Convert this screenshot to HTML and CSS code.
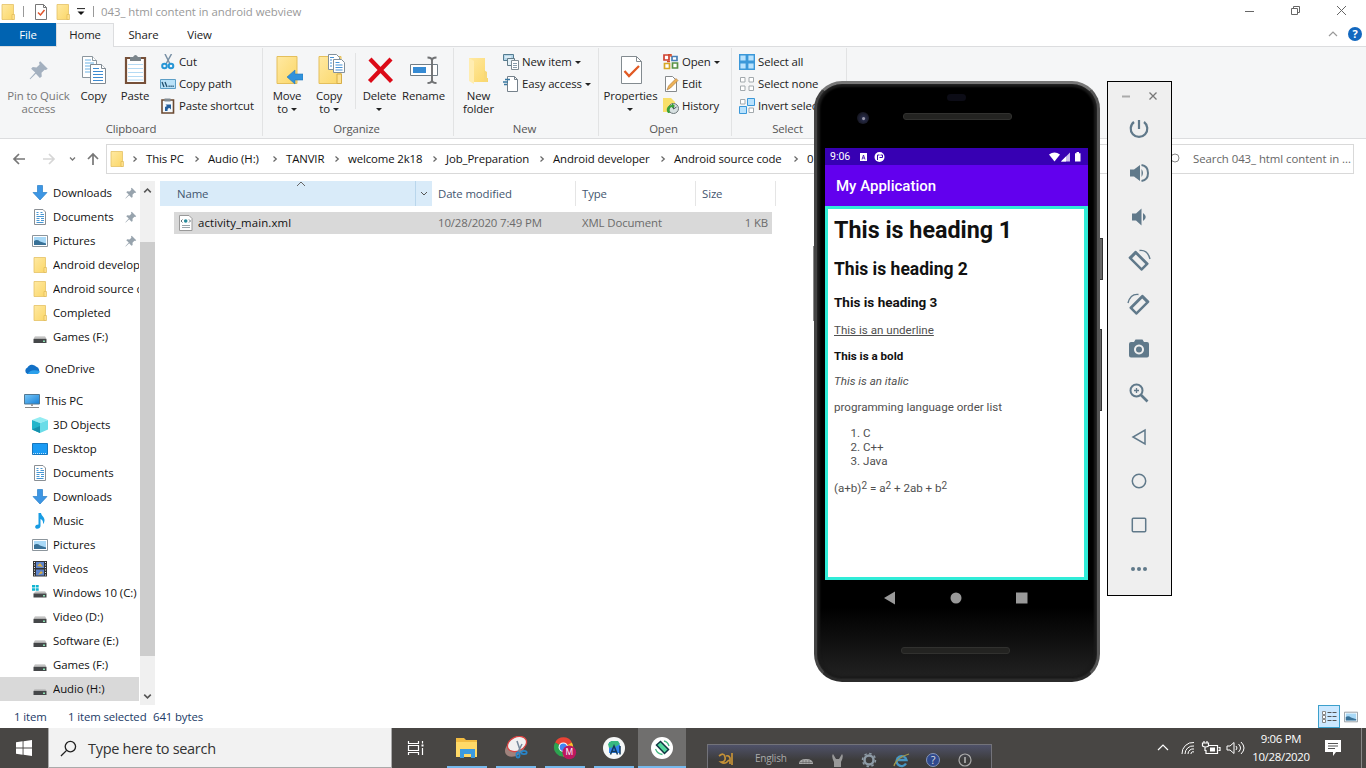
FILE: index.html
```html
<!DOCTYPE html>
<html lang="en">
<head>
<meta charset="utf-8">
<title>043_ html content in android webview</title>
<link rel="stylesheet" href="styles.css">
</head>
<body>
<svg class="defs" aria-hidden="true">
  <defs>
    <linearGradient id="gFold" x1="0" y1="0" x2="1" y2="1"><stop offset="0" stop-color="#ffe9a2"/><stop offset="1" stop-color="#fbd768"/></linearGradient>
    <linearGradient id="gBlue" x1="0" y1="0" x2="1" y2="1"><stop offset="0" stop-color="#7ac8f8"/><stop offset="1" stop-color="#1580d8"/></linearGradient>
    <linearGradient id="gDrive" x1="0" y1="0" x2="0" y2="1"><stop offset="0" stop-color="#e4e4e4"/><stop offset="1" stop-color="#a0a0a0"/></linearGradient>
  </defs>
  <symbol id="folder" viewBox="0 0 16 16"><path d="M2 .5h11.5v15H2z" fill="url(#gFold)" stroke="#e5c266" stroke-width=".8"/><path d="M12 10.500h2.500v5H12z" fill="#ffe08a" stroke="#dcb550" stroke-width=".6"/></symbol>
  <symbol id="tick" viewBox="0 0 16 16"><path d="M2.500 .5h8l3 3v12h-11z" fill="#fff" stroke="#777"/><path d="M10.500 .5v3h3" fill="none" stroke="#777"/><path d="M5 8.500l2.500 2.500 4-5" fill="none" stroke="#e0532a" stroke-width="1.500"/></symbol>
  <symbol id="down" viewBox="0 0 16 16"><path d="M5.500 .5h5v7h4.500L8 15 1 7.500h4.500z" fill="#3d96e4" stroke="#287fc9" stroke-width=".7"/></symbol>
  <symbol id="doc" viewBox="0 0 16 16"><path d="M2.500 .5h8.500l2.500 2.500v12.500h-11z" fill="#fff" stroke="#8a8f94"/><path d="M4.500 3.500h2M8.500 3.500h2M4.500 5.500h2M8.500 5.500H12M4.500 7.500H12M4.500 9.500h3M9 9.500h3M4.500 11.500h3M9 11.500h3M4.500 13.500h7" fill="none" stroke="#4796d3"/></symbol>
  <symbol id="pic" viewBox="0 0 16 16"><path d="M.5 2.500h15v11H.5z" fill="#fff" stroke="#8c959c"/><path d="M2 4h12v8H2z" fill="#a9d9f7"/><path d="M2 8q3-2 6 .5l6 2V12H2z" fill="#397197"/></symbol>
  <symbol id="drive" viewBox="0 0 16 16"><path d="M3 7h10l1.500 3h-13z" fill="url(#gDrive)"/><path d="M1.500 10h13v4h-13z" fill="#454749"/><path d="M11 11.500h2v1.500h-2z" fill="#8ce0b2"/></symbol>
  <symbol id="cdrive" viewBox="0 0 16 16"><path d="M0 0h3v2.500H0zM3.700 0h3v2.500h-3zM0 3.300h3v2.500H0zM3.700 3.300h3v2.500h-3z" fill="#11b5d2"/><path d="M4 6h9l1.500 2.500h-13z" fill="url(#gDrive)"/><path d="M1.500 8.500h13v4h-13z" fill="#454749"/><path d="M11 10h2v1.500h-2z" fill="#8ce0b2"/></symbol>
  <symbol id="cloud" viewBox="0 0 16 16"><path d="M3.500 13a3.500 3.500 0 0 1 0-6.500 5 4.500 0 0 1 8.500-1 4 4 0 0 1 1 7.500z" fill="#1270c6"/><path d="M3.500 13c2-4 7-5 12.500-2.500a3.500 3.500 0 0 1-3 2.500z" fill="#2ba0eb"/></symbol>
  <symbol id="pc" viewBox="0 0 16 16"><path d="M.5 1.500h15v9.500H.5z" fill="url(#gBlue)" stroke="#527893"/><path d="M7 11h2v2H7z" fill="#999"/><path d="M1 14.500h14" stroke="#888"/></symbol>
  <symbol id="cube" viewBox="0 0 16 16"><path d="M0 3l8-3 8 3-8 3z" fill="#93ecf2"/><path d="M0 3l8 3v10l-8-3.500z" fill="#22b5ca"/><path d="M16 3L8 6v10l8-3.500z" fill="#6adce8"/><path d="M0 12.500L8 9v7z" fill="#1691ad"/></symbol>
  <symbol id="desk" viewBox="0 0 16 16"><path d="M.5 2.500h15v11H.5z" fill="#1a9bf4" stroke="#1676bd"/><path d="M1 12.500h14" stroke="#c4e5fa" stroke-dasharray="1 1"/></symbol>
  <symbol id="music" viewBox="0 0 16 16"><path d="M6.500 0H9c.5 3 3.500 4 3.500 7 0 1.500-.5 3-1.500 4 .3-3-.5-4-2.500-5v7c0 1.500-1.700 3-3.700 2.700-2.500-.4-2.300-4.200 1.700-4.200z" fill="#189ce3"/></symbol>
  <symbol id="video" viewBox="0 0 16 16"><path d="M1 0h14v15.500H1z" fill="#343434"/><path d="M4 1h8v6H4zM4 8.500h8v6H4z" fill="#5c83cb"/><path d="M5 5l3-3 3 4zM6 14l3-4 2 2z" fill="#d8ac44"/><path d="M2.500 1v14M13.500 1v14" stroke="#eee" stroke-dasharray="1 1.500"/></symbol>
  <symbol id="pin" viewBox="0 0 16 16"><path d="M9 1l6 6-1.500 1-1-.3-2.500 2.500.2 3-1.500 1.200L5.500 11 1 15.300.5 15 5 10 1.700 7 3 5.600l3 .3L8.500 3.500 8 2z" fill="currentColor"/></symbol>
  <symbol id="sciss" viewBox="0 0 16 16"><path d="M5 0l5 10M11.500 0L6 10" fill="none" stroke="#7890a5" stroke-width="1.500"/><circle cx="4.500" cy="12" r="2.300" fill="none" stroke="#2796d6" stroke-width="2"/><circle cx="11" cy="12" r="2.300" fill="none" stroke="#2796d6" stroke-width="2"/></symbol>
  <symbol id="cpath" viewBox="0 0 16 16"><path d="M.5 3.500h15v9H.5z" fill="#b9e1f8" stroke="#5c9ec6"/><path d="M2 6l2 5M5 6l2 5" stroke="#22516f" stroke-width="1.300"/><path d="M8.500 10.300H14" stroke="#22516f" stroke-width="1.500" stroke-dasharray="1.200 .8"/></symbol>
  <symbol id="pshort" viewBox="0 0 16 16"><path d="M2 2h11.500v13H2z" fill="#f4f9fd" stroke="#6b4a32" stroke-width="1.600"/><path d="M4.500 .5h6v3h-6z" fill="#808b92"/><path d="M5 13V9l2-1-1.500-1.500H11v5L9.500 10C7.800 10 7.500 11 7.500 13z" fill="#245f9c"/></symbol>
  <symbol id="copy" viewBox="0 0 32 32"><g fill="#fff" stroke="#8b969e"><path d="M4.500 2.500h10l4 4v17h-14z"/><path d="M14.500 2.500v4h4"/></g><path d="M7 6h6M7 9h9M7 12h9M7 15h9M7 18h9" stroke="#6db3e5"/><g fill="#fff" stroke="#7e8992"><path d="M12.500 10.500h11l4 4v15h-15z"/><path d="M23.500 10.500v4h4"/></g><path d="M15 14.500h6M15 17.500h10M15 20.500h10M15 23.500h10M15 26.500h10" stroke="#3d8bd1"/></symbol>
  <symbol id="paste" viewBox="0 0 32 32"><path d="M7 4h19v25H7z" fill="#fff" stroke="#765039" stroke-width="2.200"/><path d="M11 3h3q2.500-4 5 0h3v4H11z" fill="#7b858b"/><path d="M9 10.500h15M9 14.500h15M9 18.500h15M9 22.500h15M9 26h15" stroke="#b4daf4"/></symbol>
  <symbol id="move" viewBox="0 0 32 32"><path d="M6 2.500h20v27H6z" fill="url(#gFold)" stroke="#e4bf5c"/><path d="M16 23l8-7v4h8v6h-8v4z" fill="#3092dc" stroke="#2279bc" stroke-width=".6"/></symbol>
  <symbol id="copyto" viewBox="0 0 32 32"><path d="M6 2.500h22v27H6z" fill="url(#gFold)" stroke="#e4bf5c"/><path d="M24 20h4.500v9.500H24z" fill="#ffe28f" stroke="#d6ae49"/><g fill="#fff" stroke="#82909b"><path d="M15.500 .5h8l3 3v12h-11z"/><path d="M20.500 5.500h8l3 3v10h-11z"/></g><path d="M22.500 8.500h4M22.500 11h7M22.500 13.500h7M22.500 16h7M17 3.500h4M17 6h2M17 9h2M17 12h2" stroke="#4592d7"/></symbol>
  <symbol id="delete" viewBox="0 0 32 32"><path d="M6 5l21.500 22.500M27 5L5.500 27.500" stroke="#dc0a18" stroke-width="4.200"/></symbol>
  <symbol id="rename" viewBox="0 0 32 32"><path d="M2.500 10.500h27v11h-27z" fill="#fff" stroke="#707d86"/><path d="M5 13h13v6H5z" fill="#368bd4"/><path d="M19.500 3.500q4.500 0 4.500 3v19.500q0 3-4.500 3M28.500 3.500q-4.500 0-4.500 3M24 26q0 3 4.500 3" stroke="#707274" stroke-width="1.900" fill="none"/></symbol>
  <symbol id="newfold" viewBox="0 0 32 32"><path d="M6 4h16v20h3v4H11l-5-2z" fill="url(#gFold)"/><path d="M6 4l5 3v23l-5-3z" fill="#ffedb1"/><path d="M21 16l3 2v10h-3z" fill="#f7d878"/></symbol>
  <symbol id="newitem" viewBox="0 0 16 16"><path d="M.5.5h10v6H.5z" fill="#b6d7ea" stroke="#557c91"/><path d="M2 3h6" stroke="#fff"/><path d="M4.500 4.500h7v7h-7z" fill="#e3f2f9" stroke="#627b88"/><path d="M8.500 6.500h7v9h-7z" fill="#fff" stroke="#7e8b93"/><path d="M10 9.500h4M10 11.500h4M10 13.500h4" stroke="#899dab"/></symbol>
  <symbol id="easy" viewBox="0 0 16 16"><path d="M4.500.5h7l3 3v12h-10z" fill="#fff" stroke="#75818b"/><path d="M11.500.5v3h3" stroke="#75818b" fill="none"/><path d="M2 3.500h5M0 6h5M1 8.500h3" stroke="#3978a1" stroke-width="1.500"/></symbol>
  <symbol id="prop" viewBox="0 0 32 32"><path d="M6.500 2.500h15l5 5v22h-20z" fill="#fff" stroke="#838b90"/><path d="M21.500 2.500v5h5" fill="none" stroke="#838b90"/><path d="M9.500 17l4.500 5L24 12" fill="none" stroke="#e15a24" stroke-width="2.300"/></symbol>
  <symbol id="open" viewBox="0 0 16 16"><g fill="#fff" stroke-width="1.700"><path d="M1 1h5v5H1z" stroke="#cf4030"/><path d="M9 2.500h5v4H9z" stroke="#487fb6"/><path d="M1.500 9.500h5v5h-5z" stroke="#d7a823"/><path d="M9.500 9h5v5h-5z" stroke="#579245"/></g><path d="M5 .8h3v2M4 7.500h3" fill="none" stroke="#d14e29" stroke-width="1.500"/></symbol>
  <symbol id="edit" viewBox="0 0 16 16"><path d="M2.500.5h7l4 4v11h-11z" fill="#fff" stroke="#85898b"/><path d="M15 4.500L7.500 12 4 14l1.500-4L13 2.500z" fill="#edb257" stroke="#a97538" stroke-width=".6"/></symbol>
  <symbol id="hist" viewBox="0 0 16 16"><path d="M0 0h8l4 4v10H0z" fill="#f8df69"/><circle cx="10.500" cy="10.500" r="5" fill="#d7e0e1" stroke="#6c7779"/><path d="M10.500 8v3l3-2" fill="none" stroke="#4e5a60"/><path d="M5 15c-3-4 0-8 4-8V5l3 3-3 2.500V9c-2 0-3 3-2 6z" fill="#38a139"/></symbol>
  <symbol id="selall" viewBox="0 0 16 16"><path d="M.7.7h6.600v6.600H.7zM8.700.7h6.600v6.600H8.700zM.7 8.700h6.600v6.600H.7zM8.700 8.700h6.600v6.600H8.700z" fill="#b9e2fd" stroke="#3b98d9" stroke-width="1.400"/></symbol>
  <symbol id="selnone" viewBox="0 0 16 16"><path d="M1.500 1.500h4.500v4.500H1.500zM10 1.500h4.500v4.500H10zM1.500 10h4.500v4.500H1.500zM10 10h4.500v4.500H10z" fill="#fff" stroke="#a2a9ad"/></symbol>
  <symbol id="selinv" viewBox="0 0 16 16"><path d="M1.500 1.500h4.500v4.500H1.500zM10 10h4.500v4.500H10z" fill="#fff" stroke="#a2a9ad"/><path d="M8.500.5h7v7h-7zM.5 8.500h7v7h-7z" fill="#b9e2fd" stroke="#3b98d9"/></symbol>
  <symbol id="xml" viewBox="0 0 16 16"><path d="M1.500 .5h9.500l3 3v12H1.500z" fill="#fff" stroke="#999"/><path d="M4 10.500h8M4 12.500h8" stroke="#9aa4aa"/><circle cx="7.700" cy="6" r="1.800" fill="#278b9b"/><path d="M4.500 4.500L3 6l1.500 1.500M11 4.500L12.500 6 11 7.500" fill="none" stroke="#657177"/></symbol>
  <symbol id="chev" viewBox="0 0 8 8"><path d="M2.500 1.500L5.300 4 2.500 6.500" fill="none" stroke="#666" stroke-width="1.200"/></symbol>
  <symbol id="rot" viewBox="0 0 24 24"><path fill-rule="evenodd" d="M7.400 2.600L1.900 8.100q-.7.7 0 1.400l12 12q.7.700 1.400 0l6-6q.7-.7 0-1.400l-12-12q-.7-.7-1.400 0zM8.800 5.500L18.300 15l-3.700 3.700L5.100 9.200z"/><path d="M12.500 1.500Q20.500.5 23 10" fill="none" stroke="currentColor" stroke-width="1.400"/></symbol>
</svg>

<div class="screen">
  <header class="title">
    <svg class="i16"><use href="#folder"/></svg><span class="bar b1"></span>
    <svg class="i16 t2"><use href="#tick"/></svg><svg class="i16 t3"><use href="#folder"/></svg>
    <svg class="qd" viewBox="0 0 8 8"><path d="M0 .6h8" stroke="#222"/><path d="M.5 3.500h7L4 7z" fill="#111"/></svg>
    <span class="bar b2"></span><span class="cap">043_ html content in android webview</span>
    <svg class="wc" viewBox="0 0 116 16" fill="none" stroke="#666"><path d="M5 8.500h9M51.500 5.500h6v6h-6zM53.500 5.500v-2h6v6h-2M97 3l9 9M106 3l-9 9"/></svg>
  </header>
  <nav class="tabs">
    <span class="file">File</span><span class="home">Home</span><span class="tab">Share</span><span class="tab view">View</span>
    <svg class="hlp" viewBox="0 0 36 16"><path d="M1 10l4-4 4 4" fill="none" stroke="#999" stroke-width="1.200"/><circle cx="27" cy="8" r="7" fill="#1368bf"/><text x="27" y="12" text-anchor="middle" fill="#fff" font-size="11" font-weight="bold">?</text></svg>
  </nav>
  <section class="ribbon">
    <div class="grp g1"><div class="tools">
      <div class="big dis w77"><svg class="i32"><use href="#pin" x="6" y="6" width="20" height="20"/></svg><span>Pin to Quick<br>access</span></div>
      <div class="big w33"><svg class="i32"><use href="#copy"/></svg><span>Copy</span></div>
      <div class="big w50"><svg class="i32"><use href="#paste"/></svg><span>Paste</span></div>
      <div class="rows"><div><svg class="i16"><use href="#sciss"/></svg>Cut</div><div><svg class="i16"><use href="#cpath"/></svg>Copy path</div><div><svg class="i16"><use href="#pshort"/></svg>Paste shortcut</div></div>
    </div><div class="gl">Clipboard</div></div>
    <div class="grp g2"><div class="tools">
      <div class="big w48"><svg class="i32"><use href="#move"/></svg><span>Move<br>to <i class="dd"></i></span></div>
      <div class="big w36"><svg class="i32"><use href="#copyto"/></svg><span>Copy<br>to <i class="dd"></i></span></div>
      <div class="vs"></div>
      <div class="big w48"><svg class="i32"><use href="#delete"/></svg><span>Delete<br><i class="dd"></i></span></div>
      <div class="big w41"><svg class="i32"><use href="#rename"/></svg><span>Rename</span></div>
    </div><div class="gl nudge">Organize</div></div>
    <div class="grp g3"><div class="tools">
      <div class="big w49"><svg class="i32"><use href="#newfold"/></svg><span>New<br>folder</span></div>
      <div class="rows"><div><svg class="i16"><use href="#newitem"/></svg>New item<i class="dd"></i></div><div><svg class="i16"><use href="#easy"/></svg>Easy access<i class="dd"></i></div></div>
    </div><div class="gl nudge">New</div></div>
    <div class="grp g4"><div class="tools">
      <div class="big w64"><svg class="i32"><use href="#prop"/></svg><span>Properties<br><i class="dd"></i></span></div>
      <div class="rows"><div><svg class="i16"><use href="#open"/></svg>Open<i class="dd"></i></div><div><svg class="i16"><use href="#edit"/></svg>Edit</div><div><svg class="i16"><use href="#hist"/></svg>History</div></div>
    </div><div class="gl nudge">Open</div></div>
    <div class="grp g5"><div class="tools">
      <div class="rows"><div><svg class="i16"><use href="#selall"/></svg>Select all</div><div><svg class="i16"><use href="#selnone"/></svg>Select none</div><div><svg class="i16"><use href="#selinv"/></svg>Invert selec</div></div>
    </div><div class="gl nudge">Select</div></div>
  </section>
  <section class="addr">
    <svg class="nav" viewBox="0 0 94 16" fill="none" stroke="#777" stroke-width="1.700"><path d="M19 3l-5 5 5 5M14 8h11"/><path d="M49 3l5 5-5 5M43 8h11" stroke="#d6d6d6"/><path d="M70 6.500l2.500 2.500L75 6.500" stroke-width="1.300"/><path d="M88 8l5-5 5 5M93 3v11"/></svg>
    <div class="box">
      <svg class="i16"><use href="#folder"/></svg>
      <span class="c w62"><svg><use href="#chev"/></svg>This PC</span><span class="c w78"><svg><use href="#chev"/></svg>Audio (H:)</span><span class="c w62"><svg><use href="#chev"/></svg>TANVIR</span><span class="c w98"><svg><use href="#chev"/></svg>welcome 2k18</span><span class="c w107"><svg><use href="#chev"/></svg>Job_Preparation</span><span class="c w121"><svg><use href="#chev"/></svg>Android developer</span><span class="c w133"><svg><use href="#chev"/></svg>Android source code</span><span class="c wl"><svg><use href="#chev"/></svg>0</span>
    </div>
    <div class="find"><svg viewBox="0 0 12 12" fill="none" stroke="#888"><circle cx="7" cy="5" r="4"/><path d="M4 8l-4 4"/></svg>Search 043_ html content in ...</div>
  </section>
  <main class="main">
    <aside class="tree">
      <div><svg class="i16"><use href="#down"/></svg><span>Downloads</span><svg class="pn"><use href="#pin"/></svg></div>
      <div><svg class="i16"><use href="#doc"/></svg><span>Documents</span><svg class="pn"><use href="#pin"/></svg></div>
      <div><svg class="i16"><use href="#pic"/></svg><span>Pictures</span><svg class="pn"><use href="#pin"/></svg></div>
      <div><svg class="i16"><use href="#folder"/></svg><span>Android developer</span></div>
      <div><svg class="i16"><use href="#folder"/></svg><span>Android source code</span></div>
      <div><svg class="i16"><use href="#folder"/></svg><span>Completed</span></div>
      <div><svg class="i16"><use href="#drive"/></svg><span>Games (F:)</span></div>
      <div class="root"><svg class="i16"><use href="#cloud"/></svg><span>OneDrive</span></div>
      <div class="root"><svg class="i16"><use href="#pc"/></svg><span>This PC</span></div>
      <div><svg class="i16"><use href="#cube"/></svg><span>3D Objects</span></div>
      <div><svg class="i16"><use href="#desk"/></svg><span>Desktop</span></div>
      <div><svg class="i16"><use href="#doc"/></svg><span>Documents</span></div>
      <div><svg class="i16"><use href="#down"/></svg><span>Downloads</span></div>
      <div><svg class="i16"><use href="#music"/></svg><span>Music</span></div>
      <div><svg class="i16"><use href="#pic"/></svg><span>Pictures</span></div>
      <div><svg class="i16"><use href="#video"/></svg><span>Videos</span></div>
      <div><svg class="i16"><use href="#cdrive"/></svg><span>Windows 10 (C:)</span></div>
      <div><svg class="i16"><use href="#drive"/></svg><span>Video (D:)</span></div>
      <div><svg class="i16"><use href="#drive"/></svg><span>Software (E:)</span></div>
      <div><svg class="i16"><use href="#drive"/></svg><span>Games (F:)</span></div>
      <div class="sel"><svg class="i16"><use href="#drive"/></svg><span>Audio (H:)</span></div>
    </aside>
    <div class="sb"><svg viewBox="0 0 16 16"><path d="M4.500 11L8 7.500l3.500 3.500" fill="none" stroke="#555" stroke-width="1.700"/></svg><div class="thumb"></div><svg viewBox="0 0 16 16"><path d="M4.500 6L8 9.500 11.500 6" fill="none" stroke="#555" stroke-width="1.700"/></svg></div>
    <div class="files">
      <div class="head"><span class="hn">Name<svg viewBox="0 0 10 6"><path d="M1 5l4-4 4 4" fill="none" stroke="#666"/></svg></span><span class="hd"><svg viewBox="0 0 10 6"><path d="M2 1l3 3 3-3" fill="none" stroke="#555"/></svg></span><span class="h1">Date modified</span><span class="h2">Type</span><span class="h3">Size</span></div>
      <div class="row"><svg class="i16"><use href="#xml"/></svg><span class="fn">activity_main.xml</span><span class="fd">10/28/2020 7:49 PM</span><span class="ft">XML Document</span><span class="fs">1 KB</span></div>
    </div>
  </main>
  <footer class="status"><span class="s1">1 item</span><span class="s2">1 item selected</span><span class="s3">641 bytes</span>
    <span class="vm"><svg viewBox="0 0 16 16"><path d="M1.500 2.500h3v3h-3zM1.500 6.500h3v3h-3zM1.500 10.500h3v3h-3z" fill="#fff" stroke="#888"/><path d="M6.500 3.500h9M6.500 7.500h9M6.500 11.500h9" stroke="#555" stroke-dasharray="4 1"/></svg></span><svg class="vp" viewBox="0 0 16 16"><use href="#pic"/></svg>
  </footer>
  <div class="task">
    <svg class="win" viewBox="0 0 16 16" fill="#fff"><path d="M0 2.200l6.600-.9v6.200H0zM7.500 1.200L16 0v7.500H7.500zM0 8.500h6.600v6.200L0 13.800zM7.500 8.500H16V16l-8.500-1.200z"/></svg>
    <div class="search"><svg viewBox="0 0 18 18" fill="none" stroke="#222" stroke-width="1.400"><circle cx="11" cy="7" r="5.500"/><path d="M7 11l-6 6"/></svg>Type here to search</div>
    <div class="app tv"><svg viewBox="0 0 18 16" fill="none" stroke="#fff" stroke-width="1.200"><path d="M1.500 1v2.500h10V1M1.500 5.500h10v5h-10zM1.500 15v-2.500h10V15M15.500 1v2.500M15.500 8v7"/><path d="M14.500 4.500h2v2h-2z" fill="#fff" stroke="none"/></svg></div>
    <div class="app on"><svg viewBox="0 0 24 24"><path d="M1 2h8l2 2h11v17H1z" fill="#f2bc42"/><path d="M1 6h21v15H1z" fill="#ffd967"/><path d="M5 22v-9h15v9h-4v-4H9v4z" fill="#3b9ae0"/></svg></div>
    <div class="app on"><svg viewBox="0 0 24 24"><ellipse cx="11" cy="12" rx="11" ry="7.500" fill="#a0827c" transform="rotate(-35 11 12)"/><ellipse cx="13" cy="8" rx="10" ry="7" fill="#f1f1f1" stroke="#d94343" stroke-width="1.300" transform="rotate(-25 13 8)"/><path d="M13 5l4 12M18 8l-4 8" stroke="#75889b" stroke-width="1.500"/><ellipse cx="14" cy="19" rx="1.600" ry="2.700" fill="none" stroke="#2884c8" stroke-width="1.800"/><ellipse cx="20" cy="16.500" rx="2.700" ry="1.600" fill="none" stroke="#2884c8" stroke-width="1.800"/></svg></div>
    <div class="app on"><svg viewBox="0 0 28 28"><path d="M12 13L2.500 7.500A11 11 0 0 1 22 7.500z" fill="#ea4335"/><path d="M12 13L2.500 7.500A11 11 0 0 0 12 24z" fill="#2da450"/><path d="M12 13L22 7.500A11 11 0 0 1 12 24z" fill="#fbc12d"/><circle cx="12" cy="13" r="5.500" fill="#fff"/><circle cx="12" cy="13" r="4.200" fill="#4285f4"/><circle cx="19" cy="19" r="8" fill="#bd1760"/><text x="19" y="22.500" text-anchor="middle" fill="#fff" font-size="10">M</text></svg></div>
    <div class="app on"><svg viewBox="0 0 24 24"><circle cx="12" cy="12" r="11" fill="#f5f7f7"/><path d="M7 6h8l3 3v8H7z" fill="#3285ed"/><path d="M6 8l3-3h7l2 3-5 3-6 1z" fill="#37b982"/><path d="M8.500 18.500L12 10l3.500 8.500M18 10v8.500M10 15.500h4" fill="none" stroke="#13395b" stroke-width="1.500"/></svg></div>
    <div class="app on act"><svg viewBox="0 0 24 24"><circle cx="12" cy="12" r="11" fill="#fff"/><path d="M6.500 9l4-3.500 8 8-4 4z" fill="#52d79c" stroke="#113643" stroke-width="1.500"/><path d="M5.500 13q2 5 7 5.500M14 5q4 1 5 5" fill="none" stroke="#46b983" stroke-width="1.300"/></svg></div>
    <div class="lang"><svg class="bn" viewBox="0 0 18 16"><path d="M2 5q5-4 6 1t-4 5q4 3 8-2M9 5q3-1 4 2v6M15 2v12" fill="none" stroke="#c59137" stroke-width="1.700"/></svg><span>English</span>
      <svg class="lt" viewBox="0 0 200 18"><path d="M8 14q0-5 7-5t7 5z" fill="#aaa"/><path d="M9 12.500h12M12 10v3.500M15 10v3.500M18 10v3.500" stroke="#666" stroke-width=".7"/><path d="M43 17v-5q-3-6-1-8l3 5h3l3-5q2 2-1 8v5z" fill="#999"/><circle cx="78" cy="10" r="4.500" fill="none" stroke="#8e9ba6" stroke-width="2.500"/><circle cx="78" cy="10" r="6.500" fill="none" stroke="#8e9ba6" stroke-width="1.500" stroke-dasharray="2.500 2.500"/><path d="M115 13.500a5 5 0 1 1 .5-3.500h-9" fill="none" stroke="#4797c4" stroke-width="2.300"/><path d="M103 16q2-8 15-12" fill="none" stroke="#a59b4b" stroke-width="1.300"/><circle cx="142" cy="10" r="6.500" fill="#2f498e" stroke="#8595b8"/><text x="142" y="14" text-anchor="middle" fill="#ddd" font-size="11">?</text><circle cx="174" cy="10" r="6" fill="none" stroke="#aaa" stroke-width="1.200"/><path d="M174 7v6" stroke="#bbb" stroke-width="1.500"/></svg>
    </div>
    <div class="tray"><svg viewBox="0 0 94 20" fill="none" stroke="#fff" stroke-width="1.200"><path d="M6 12l5-5 5 5"/><g stroke-width="1"><path d="M30 16A11 11 0 0 1 42 4.500M33 16a8 8 0 0 1 9-8M36 16a5 5 0 0 1 6-5M39 16a2 2 0 0 1 3-2"/></g><path d="M56 7.500h9.500v8H54V12M66.500 9.500h1.500v3h-1.500M52 3v2M55 3v2M50.500 5h6v3q-3 2-6 0zM53 9v4"/><path d="M58 9.500h5v4h-5z" fill="#fff" stroke="none"/><path d="M75 8h3l4-3.500v11L78 12h-3zM84 8q2 2 0 4M86.500 6q4 4 0 8M89 4q6 6 0 12" stroke-width="1"/></svg>
      <div class="clock"><span>9:06 PM</span><span>10/28/2020</span></div>
      <svg class="note" viewBox="0 0 16 16"><path d="M0 0h16v12h-5l-3 4v-4H0z" fill="#fff"/><path d="M3 3.500h10M3 6h10M3 8.500h7" stroke="#555"/></svg><span class="edge"></span>
    </div>
  </div>

  <div class="phone">
    <i class="key k1"></i><i class="key k2"></i><i class="key k3"></i>
    <div class="shell">
      <div class="top"><i class="sensor"></i><i class="cam"></i><i class="spk"></i></div>
      <div class="disp">
        <div class="abar"><span>9:06</span><svg class="nl" viewBox="0 0 26 10"><path d="M0 1h7v8H0z" fill="#fff"/><path d="M2 7.500L3.500 3 5 7.500M2.500 6h2" stroke="#3700b3" fill="none" stroke-width=".8"/><circle cx="19.500" cy="5" r="5" fill="#fff"/><path d="M17.500 8V3h2M20.500 3h2v2.500h-3" stroke="#3700b3" fill="none"/></svg><svg class="nr" viewBox="0 0 33 10" fill="#fff"><path d="M0 2.500q5.500-4 11 0L5.500 9.500z"/><path d="M12 9.500h9V.5z" opacity=".75"/><path d="M12 9.500h5V4.500z"/><path d="M26 1.200h1.500V0h2.500v1.200h1.500v8.300H26z"/></svg></div>
        <div class="app-bar">My Application</div>
        <div class="web">
          <h1>This is heading 1</h1><h2>This is heading 2</h2><h3>This is heading 3</h3>
          <p><u>This is an underline</u></p><p><b>This is a bold</b></p><p><em>This is an italic</em></p><p>programming language order list</p>
          <ol><li>C</li><li>C++</li><li>Java</li></ol>
          <p class="eq">(a+b)<sup>2</sup> = a<sup>2</sup> + 2ab + b<sup>2</sup></p>
        </div>
      </div>
      <svg class="nbar" viewBox="0 0 263 36" fill="#999"><path d="M59 18l11-6.500v13z"/><circle cx="131" cy="18" r="5.500"/><path d="M191 12.500h11.500v11H191z"/></svg>
      <i class="spk lower"></i>
    </div>
  </div>
  <div class="emu">
    <svg class="ew" viewBox="0 0 64 20" fill="none" stroke="#777" stroke-width="1.300"><path d="M14 14.500h8" stroke="#aaa" stroke-width="2"/><path d="M41.500 10.500l7 7M48.500 10.500l-7 7"/></svg>
    <svg viewBox="0 0 24 24" fill="none" stroke="#60798a" stroke-width="2.200"><path d="M12 3v9M7 5a8.300 8.300 0 1 0 10 0"/></svg>
    <svg viewBox="0 0 24 24"><path d="M3 8.500h4L13 4v16l-6-4.500H3z"/><path d="M14.500 8q3 4 0 8z"/><path d="M14.500 4q6.500 1 6.500 8t-6.500 8" fill="none" stroke="currentColor" stroke-width="2"/></svg>
    <svg viewBox="0 0 24 24"><path d="M5 8.500h4l5.500-5v17l-5.500-5H5zM16 8q5.500 4 0 8z"/></svg>
    <svg viewBox="0 0 24 24"><use href="#rot"/></svg>
    <svg viewBox="0 0 24 24"><use href="#rot" transform="translate(24 0) scale(-1 1)"/></svg>
    <svg viewBox="0 0 24 24"><path fill-rule="evenodd" d="M8.500 2.500h7L17 5h3q2 0 2 2v11.500q0 2-2 2H4q-2 0-2-2V7q0-2 2-2h3zM12 7.500a5 5 0 1 0 .01 0z"/><circle cx="12" cy="12.500" r="3"/></svg>
    <svg viewBox="0 0 24 24" fill="none" stroke="#60798a" stroke-width="2"><circle cx="9.500" cy="9.500" r="6"/><path d="M14 14l6.500 6.500" stroke-width="2.600"/><path d="M9.500 7v5M7 9.500h5" stroke-width="1.300"/></svg>
    <svg viewBox="0 0 24 24" fill="none" stroke="#60798a" stroke-width="1.500"><path d="M18 5v14L6 12z"/></svg>
    <svg viewBox="0 0 24 24" fill="none" stroke="#60798a" stroke-width="1.500"><circle cx="12" cy="12" r="6.700"/></svg>
    <svg viewBox="0 0 24 24" fill="none" stroke="#60798a" stroke-width="1.500"><rect x="5.300" y="5.300" width="13.400" height="13.400" rx="1"/></svg>
    <svg viewBox="0 0 24 24"><circle cx="6" cy="12" r="2"/><circle cx="12" cy="12" r="2"/><circle cx="18" cy="12" r="2"/></svg>
  </div>
</div>
</body>
</html>
```
FILE: styles.css
```css
* { box-sizing: border-box; }
body { margin: 0; overflow: hidden; background: #fff; font: 11.4px/14px "Open Sans", "Noto Sans", sans-serif; letter-spacing: -.12px; color: #222; }
.defs { position: absolute; width: 0; height: 0; }
svg { display: block; flex: none; }
.screen { position: relative; width: 1366px; height: 768px; display: flex; flex-direction: column; overflow: hidden; }
.i16 { width: 16px; height: 16px; }
.i32 { width: 32px; height: 32px; }
.w33 { width: 33px; } .w36 { width: 36px; } .w41 { width: 41px; } .w48 { width: 48px; } .w49 { width: 49px; } .w50 { width: 50px; }
.w62 { width: 62px; } .w64 { width: 63px; margin-right: 1px; } .w77 { width: 77px; } .w78 { width: 78px; } .w98 { width: 98px; }
.w107 { width: 107px; } .w121 { width: 121px; } .w133 { width: 133px; }

.title { height: 23px; display: flex; align-items: center; color: #999; }
.cap { letter-spacing: -.05px; }
.bar { width: 1px; height: 11px; background: #999; }
.b1 { margin: 0 9px 0 7px; }
.t3 { margin-left: 6px; }
.qd { width: 8px; height: 8px; margin-left: 6px; }
.b2 { margin: 0 7px 0 8px; }
.wc { width: 116px; height: 16px; margin: -2px 10px 0 auto; }

.tabs { height: 24px; display: flex; border-bottom: 1px solid #dcdddf; }
.tabs span { line-height: 24px; text-align: center; }
.file { width: 56px; background: #0063b1; color: #fff; }
.home { width: 58px; height: 24px; background: #f5f6f7; border: 1px solid #dcdddf; border-bottom: 0; }
.tabs .home { line-height: 22px; }
.tab { width: 59px; }
.view { width: 53px; }
.hlp { width: 36px; height: 16px; margin: 3px 2px 0 auto; }

.ribbon { height: 92px; display: flex; background: #f5f6f7; border-bottom: 1px solid #dcdddf; padding: 1px 0 2px; }
.grp { border-right: 1px solid #e2e3e4; display: flex; flex-direction: column; justify-content: space-between; }
.g1 { width: 263px; } .g2 { width: 191px; } .g3 { width: 145px; } .g4 { width: 133px; } .g5 { width: 115px; }
.gl { text-align: center; color: #555; line-height: 16px; height: 15px; }
.nudge { padding-right: 3px; }
.tools { display: flex; height: 68px; padding-top: 3px; }
.big { display: flex; flex-direction: column; align-items: center; padding-top: 3px; text-align: center; line-height: 13px; white-space: nowrap; }
.big span { margin-top: 3px; }
.dis { color: #777; }
.dis svg { color: #a3b0bf; }
.rows div { display: flex; align-items: center; height: 22px; gap: 3px; white-space: nowrap; }
.g5 .rows { padding-left: 7px; }
.vs { width: 1px; height: 56px; background: #e2e3e4; margin: 2px 0 0 8px; }
.vs + .big { width: 47px; }
.dd { display: inline-block; vertical-align: 2px; border: 3px solid transparent; border-top-color: #222; border-bottom: 0; }

.addr { height: 42px; display: flex; padding-top: 5px; }
.nav { width: 94px; height: 16px; overflow: visible; margin: 7px 12px 0 0; }
.box { width: 1056px; height: 30px; border: 1px solid #d9d9d9; display: flex; align-items: center; padding-left: 2px; overflow: hidden; white-space: nowrap; color: #111; }
.box .i16 { margin-right: 6px; }
.c { display: flex; align-items: center; flex: none; }
.c svg { width: 8px; height: 8px; margin-right: 7px; }
.find { flex: none; width: 187px; margin-left: 5px; border: 1px solid #d9d9d9; height: 30px; display: flex; align-items: center; color: #666; white-space: nowrap; letter-spacing: -.05px; }
.find svg { width: 12px; height: 12px; margin: 0 13px 0 0; }

.main { height: 524px; display: flex; }
.tree { width: 139px; overflow: hidden; color: #111; letter-spacing: -.05px; }
.tree div { height: 24px; display: flex; align-items: center; padding-left: 32px; gap: 5px; white-space: nowrap; }
.tree .root { margin: 8px 0; padding-left: 24px; }
.tree .root + .root { margin-bottom: 0; }
.tree span { flex: 1; overflow: hidden; }
.tree .sel { background: #d9d9d9; }
.pn { width: 12px; height: 12px; color: #97a3ad; margin-right: 2px; }
.sb { width: 17px; margin-left: 1px; background: #f0f0f0; display: flex; flex-direction: column; border-right: 2px solid #fff; }
.sb svg { width: 15px; height: 17px; }
.thumb { height: 414px; margin: 44px 0 32px; background: #cdcdcd; }
.files { padding-left: 3px; }
.head { height: 25px; display: flex; color: #43566f; line-height: 26px; }
.head span { border-right: 1px solid #e5e5e5; padding-left: 6px; }
.head .hn { width: 256px; background: #d9ebf9; padding-left: 17px; display: flex; border-color: #b9d6ec; }
.hn svg { width: 10px; height: 6px; margin-left: 88px; }
.head .hd { width: 16px; background: #d9ebf9; padding: 10px 0 0 3px; border: 0; }
.hd svg { width: 10px; height: 6px; }
.head .h1 { width: 144px; } .head .h2 { width: 120px; } .head .h3 { width: 80px; }
.row { width: 598px; height: 22px; margin: 6px 0 0 14px; background: #d9d9d9; display: flex; align-items: center; padding-left: 4px; color: #6b6b6b; white-space: nowrap; }
.fn { color: #111; width: 244px; padding-left: 4px; letter-spacing: .12px; } .fd { width: 144px; } .ft { width: 120px; } .fs { width: 66px; text-align: right; }

.status { height: 23px; display: flex; align-items: center; color: #203a66; padding-left: 14px; }
.s1 { width: 54px; } .s2 { width: 85px; } .s3 { flex: 1; }
.vm { width: 22px; height: 23px; background: #cce8ff; border: 1px solid #3ca0cc; padding: 3px 2px; margin-right: 4px; }
.vm svg { width: 16px; height: 16px; }
.vp { width: 14px; height: 14px; margin-right: 8px; }

.task { height: 40px; background: #484644; display: flex; align-items: center; color: #fff; }
.win { width: 16px; height: 16px; margin: 0 16px; }
.search { width: 344px; height: 40px; background: #f2f2f2; border: 1px solid #aaa; border-top: 0; color: #333; font-size: 14.5px; letter-spacing: -.3px; display: flex; align-items: center; padding: 2px 0 0 11px; gap: 11px; }
.search svg { width: 17px; height: 17px; }
.app { width: 49px; height: 40px; display: flex; align-items: center; justify-content: center; }
.app svg { width: 24px; height: 24px; }
.app.tv { width: 50px; padding-right: 2px; } .tv svg { width: 18px; height: 16px; }
.on { background: linear-gradient(#76b9ed, #76b9ed) center bottom / 40px 2px no-repeat; }
.app.act { width: 48px; background: linear-gradient(#76b9ed, #76b9ed) bottom / 100% 2px no-repeat #706f6e; }
.lang { align-self: flex-end; width: 285px; height: 24px; margin-left: 21px; background: linear-gradient(#4f5269, #3d3c3c 65%); border: 1px solid #73737a; border-bottom: 0; display: flex; align-items: center; color: #aaa; font-size: 10px; line-height: 12px; padding-top: 4px; }
.bn { width: 18px; height: 16px; margin: 0 20px 0 9px; }
.lang span { width: 52px; margin-top: -2px; letter-spacing: -.2px; }
.lt { width: 200px; height: 18px; }
.tray { margin-left: auto; display: flex; align-items: center; height: 40px; }
.tray > svg:first-child { width: 94px; height: 20px; }
.clock { width: 70px; display: flex; flex-direction: column; align-items: center; line-height: 18px; letter-spacing: -.28px; margin-top: -1px; }
.note { width: 16px; height: 16px; margin: 0 20px 0 9px; }
.edge { width: 1px; height: 40px; background: #888; margin-right: 4px; }

/* Floating emulator window */
.phone { position: absolute; left: 814px; top: 81px; width: 286px; height: 601px; }
.shell { position: relative; width: 286px; height: 601px; border-radius: 28px; background: linear-gradient(#000 88%, #222); border: 3px solid; border-color: #777 #555 #2b2b2b #444; box-shadow: inset 0 0 0 1px #222, inset 0 0 2px 3px #1b1b1b; padding: 0 8px; }
.top { position: relative; height: 64px; }
.sensor { position: absolute; left: 122px; top: 10px; width: 19px; height: 7px; border-radius: 4px; background: #0c0c16; }
.cam { position: absolute; left: 32px; top: 28px; width: 12px; height: 12px; border-radius: 50%; background: radial-gradient(circle at 55% 55%, #99a 0 1px, #262a45 2px, #171824 6px); }
.spk { position: absolute; left: 78px; top: 29px; width: 109px; height: 7px; border-radius: 3px; background: #232321; border: 1px solid #31312f; }
.spk.lower { left: 84px; top: 563px; }
.key { position: absolute; background: #666; border: 1px solid #333; width: 4px; }
.k1 { left: 285px; top: 157px; height: 42px; }
.k2 { left: 284px; top: 248px; height: 82px; }
.k3 { left: -1px; top: 165px; height: 75px; width: 2px; background: #888; border: 0; }
.disp { width: 263px; height: 432px; font-family: Roboto, sans-serif; letter-spacing: 0; }
.abar { height: 17px; background: #3700b3; color: #fff; display: flex; align-items: center; padding: 0 6px 0 5px; font-size: 10.500px; }
.nl { width: 26px; height: 10px; margin-left: 10px; }
.nr { width: 33px; height: 10px; margin-left: auto; }
.app-bar { height: 41px; background: #6200ee; color: #fff; font-size: 15px; font-weight: 500; line-height: 43px; padding-left: 11px; }
.web { height: 374px; background: #fff; border: 3px solid #30ecd8; border-right-width: 4px; padding: 1px 6px; color: #505050; font-size: 11.600px; line-height: 14px; }
.web h1, .web h2, .web h3 { color: #111; margin: 0; font-weight: 700; }
.web h1 { font-size: 23.300px; line-height: 28px; margin-top: 6px; }
.web h2 { font-size: 17.500px; line-height: 20px; margin-top: 15px; }
.web h3 { font-size: 13.500px; line-height: 16px; margin-top: 15px; }
.web p { margin: 11.700px 0 0; }
.web h3 + p { margin-top: 13px; }
.web b { color: #111; }
.web ol { margin: 12px 0 0; padding-left: 29px; }
.web .eq { margin-top: 13px; }
.web sup { font-size: 10px; line-height: 0; vertical-align: 3.500px; }
.nbar { width: 263px; height: 36px; }

/* Emulator control strip */
.emu { position: absolute; left: 1107px; top: 81px; width: 65px; height: 515px; background: #efefef; border: 1px solid #000; color: #60798a; fill: #60798a; display: flex; flex-direction: column; align-items: center; gap: 20px; padding-right: 2px; }
.emu svg { width: 24px; height: 24px; }
.emu .ew { width: 64px; height: 20px; margin: 0 0 -5px 2px; }
```
